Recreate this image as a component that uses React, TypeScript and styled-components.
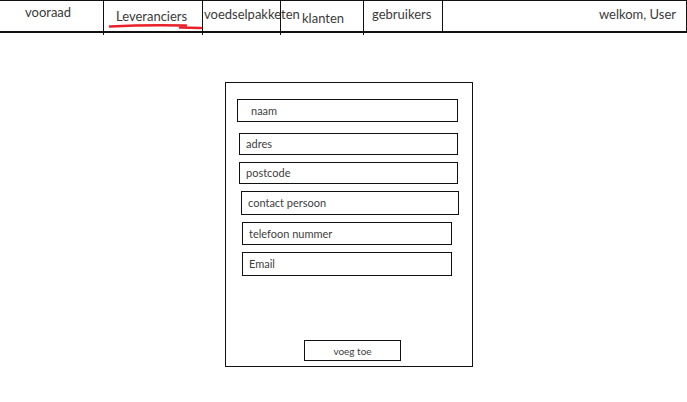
import styled, { createGlobalStyle } from "styled-components";

const Global = createGlobalStyle`
  html, body {
    margin: 0;
    padding: 0;
    background: #fff;
  }
  body {
    font-family: Lato, "Open Sans", sans-serif;
    color: #3a3a3a;
  }
`;

const Page = styled.div`
  width: 687px;
  height: 402px;
  overflow: hidden;
`;

const Nav = styled.nav`
  display: flex;
  width: 687px;
  height: 33px;
  box-sizing: border-box;
  border-top: 1px solid #111;
  border-bottom: 2px solid #111;
`;

const NavItem = styled.div<{ $w: number; $left: number; $top: number; $right?: boolean; $first?: boolean }>`
  position: relative;
  flex: 0 0 ${(p) => p.$w}px;
  min-width: 0;
  box-sizing: border-box;
  height: 34px;
  margin-bottom: -4px;
  border-left: ${(p) => (p.$first ? "none" : "1px solid #111")};
  padding: ${(p) => p.$top}px ${(p) => (p.$right ? 10 : 0)}px 0 ${(p) => p.$left}px;
  font-size: 13px;
  line-height: 16px;
  white-space: nowrap;
  text-align: ${(p) => (p.$right ? "right" : "left")};
  &:last-child {
    border-right: 1px solid #111;
    height: 30px;
    margin-bottom: 0;
  }
`;

const Scribble = styled.svg`
  position: absolute;
  left: 4px;
  top: 22px;
`;

const Form = styled.form`
  display: flex;
  flex-direction: column;
  width: 248px;
  height: 285px;
  box-sizing: border-box;
  margin: 49px 0 0 225px;
  padding: 16px 0 5px 0;
  border: 1px solid #111;
`;

const Field = styled.div<{ $x: number; $w: number; $h: number; $gap: number; $pad: number }>`
  box-sizing: border-box;
  margin: ${(p) => p.$gap}px 0 0 ${(p) => p.$x}px;
  width: ${(p) => p.$w}px;
  height: ${(p) => p.$h}px;
  padding-left: ${(p) => p.$pad}px;
  border: 1px solid #111;
  font-size: 11px;
  line-height: ${(p) => p.$h - 2}px;
  color: #404040;
`;

const Submit = styled.button`
  box-sizing: border-box;
  margin: auto 0 0 78px;
  width: 97px;
  height: 21px;
  border: 1px solid #111;
  background: #fff;
  font-family: Lato, "Open Sans", sans-serif;
  font-size: 10px;
  color: #404040;
  padding: 0;
`;

const nav = [
  { label: "vooraad", w: 103, left: 25, top: 3, first: true },
  { label: "Leveranciers", w: 99, left: 12, top: 7, active: true },
  { label: "voedselpakketen", w: 78, left: 1, top: 5 },
  { label: "klanten", w: 83, left: 21, top: 9 },
  { label: "gebruikers", w: 79, left: 8, top: 5 },
];

const fields = [
  { label: "naam", x: 11, w: 221, h: 23, gap: 0, pad: 13 },
  { label: "adres", x: 13, w: 219, h: 22, gap: 11, pad: 6 },
  { label: "postcode", x: 13, w: 219, h: 22, gap: 7, pad: 6 },
  { label: "contact persoon", x: 15, w: 218, h: 24, gap: 7, pad: 6 },
  { label: "telefoon nummer", x: 16, w: 210, h: 23, gap: 7, pad: 6 },
  { label: "Email", x: 16, w: 210, h: 24, gap: 7, pad: 6 },
];

export default function App() {
  return (
    <Page>
      <Global />
      <Nav>
        {nav.map((n) => (
          <NavItem key={n.label} $w={n.w} $left={n.left} $top={n.top} $first={n.first}>
            {n.label}
            {n.active && (
              <Scribble width="96" height="8" viewBox="0 0 96 8">
                <path d="M2 3.5 C 30 2, 60 2, 78 2.5" stroke="#e8202a" strokeWidth="2.5" fill="none" strokeLinecap="round" />
                <path d="M72 4.5 L 93 5" stroke="#e8202a" strokeWidth="2.5" fill="none" strokeLinecap="round" />
              </Scribble>
            )}
          </NavItem>
        ))}
        <NavItem $w={245} $left={10} $top={5} $right>
          welkom, User
        </NavItem>
      </Nav>
      <Form onSubmit={(e) => e.preventDefault()}>
        {fields.map((f) => (
          <Field key={f.label} $x={f.x} $w={f.w} $h={f.h} $gap={f.gap} $pad={f.pad}>
            {f.label}
          </Field>
        ))}
        <Submit type="submit">voeg toe</Submit>
      </Form>
    </Page>
  );
}
